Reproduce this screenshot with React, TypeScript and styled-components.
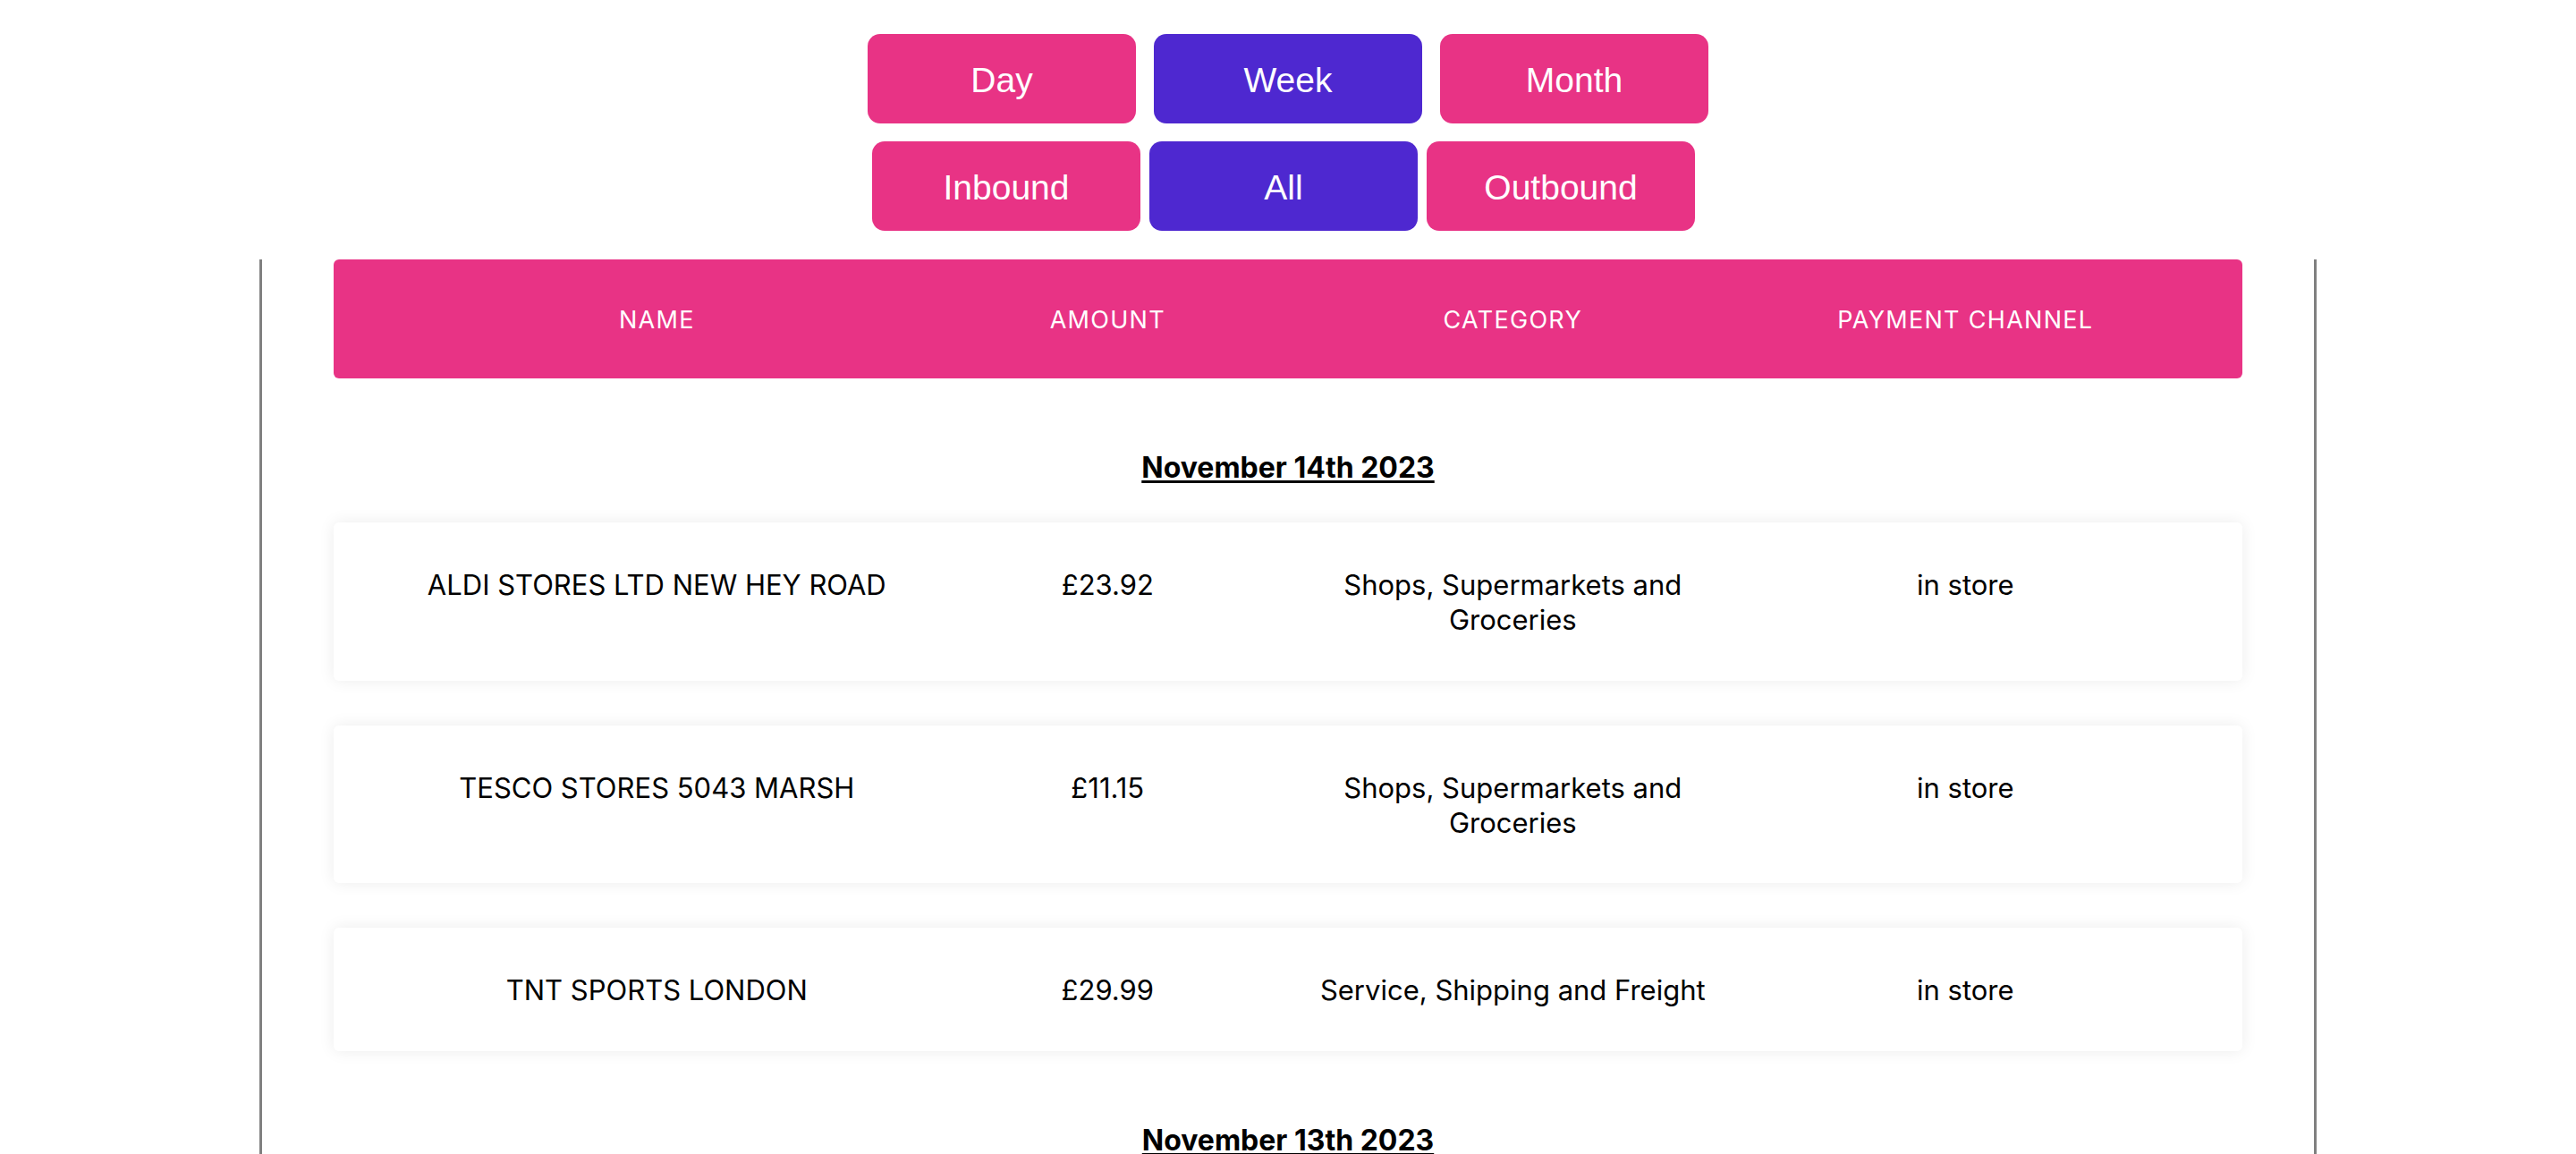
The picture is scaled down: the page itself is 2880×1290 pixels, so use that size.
import React, { useState } from 'react';
import styled, { createGlobalStyle } from 'styled-components';

const GlobalStyle = createGlobalStyle`
  html, body {
    margin: 0;
    padding: 0;
    background: #fff;
  }
  body {
    font-family: Inter, "Noto Sans", sans-serif;
    color: #000;
  }
`;

const Filters = styled.div`
  display: flex;
  flex-direction: column;
  align-items: center;
  gap: 20px;
  padding-top: 38px;
  margin-bottom: 32px;
`;

const FilterRow = styled.div<{ $gap: number; $shift?: number }>`
  display: flex;
  gap: ${p => p.$gap}px;
  margin-right: ${p => (p.$shift || 0)}px;
`;

const FilterButton = styled.button<{ $active: boolean }>`
  width: 300px;
  height: 100px;
  border: none;
  border-radius: 14px;
  background-color: ${p => (p.$active ? '#4e28d0' : '#e83385')};
  color: #fff;
  font-family: "Liberation Sans", Arial, sans-serif;
  font-size: 39px;
  cursor: pointer;
  padding: 3px 0 0;
`;

const Panel = styled.div`
  width: 2300px;
  min-height: 1100px;
  margin: 0 auto;
  box-sizing: border-box;
  border-left: 3px solid #808080;
  border-right: 3px solid #808080;
  padding-bottom: 80px;
`;

const Columns = styled.div`
  display: grid;
  grid-template-columns: 574px 434px 472px 540px;
  padding: 0 43px 0 74px;
  text-align: center;
`;

const HeaderBar = styled(Columns)`
  width: 93%;
  margin: 0 auto;
  height: 133px;
  box-sizing: border-box;
  align-items: center;
  background-color: #e83385;
  border-radius: 6px;
  color: #fff;
  font-size: 27px;
  letter-spacing: 1.3px;
  text-transform: uppercase;
  padding-top: 2px;
`;

const DateHeading = styled.h3`
  margin: 0;
  padding: 81px 0 42px;
  text-align: center;
  font-size: 32px;
  font-weight: 700;
  line-height: 1.2;
  text-decoration: underline;
  text-underline-offset: 3px;
`;

const Rows = styled.div`
  display: flex;
  flex-direction: column;
  gap: 50px;
`;

const Row = styled(Columns)`
  width: 93%;
  margin: 0 auto;
  box-sizing: border-box;
  align-items: start;
  padding-top: 51px;
  padding-bottom: 48px;
  background: #fff;
  border-radius: 6px;
  box-shadow: 0 0 18px rgba(0, 0, 0, 0.08);
  font-size: 31px;
  line-height: 1.25;
`;

const Cell = styled.div`
  padding: 0 10px;
`;

type Tx = { name: string; amount: string; category: string; channel: string };

const groups: { date: string; items: Tx[] }[] = [
  {
    date: 'November 14th 2023',
    items: [
      { name: 'ALDI STORES LTD NEW HEY ROAD', amount: '£23.92', category: 'Shops, Supermarkets and Groceries', channel: 'in store' },
      { name: 'TESCO STORES 5043 MARSH', amount: '£11.15', category: 'Shops, Supermarkets and Groceries', channel: 'in store' },
      { name: 'TNT SPORTS LONDON', amount: '£29.99', category: 'Service, Shipping and Freight', channel: 'in store' },
    ],
  },
  {
    date: 'November 13th 2023',
    items: [],
  },
];

const App = () => {
  const [period, setPeriod] = useState('Week');
  const [direction, setDirection] = useState('All');

  return (
    <>
      <GlobalStyle />
      <Filters>
        <FilterRow $gap={20}>
          {['Day', 'Week', 'Month'].map(p => (
            <FilterButton key={p} $active={period === p} onClick={() => setPeriod(p)}>
              {p}
            </FilterButton>
          ))}
        </FilterRow>
        <FilterRow $gap={10} $shift={10}>
          {['Inbound', 'All', 'Outbound'].map(d => (
            <FilterButton key={d} $active={direction === d} onClick={() => setDirection(d)}>
              {d}
            </FilterButton>
          ))}
        </FilterRow>
      </Filters>
      <Panel>
        <HeaderBar>
          <Cell>Name</Cell>
          <Cell>Amount</Cell>
          <Cell>Category</Cell>
          <Cell>Payment Channel</Cell>
        </HeaderBar>
        {groups.map(g => (
          <div key={g.date}>
            <DateHeading>{g.date}</DateHeading>
            {g.items.length > 0 && (
              <Rows>
                {g.items.map((t, i) => (
                  <Row key={i}>
                    <Cell>{t.name}</Cell>
                    <Cell>{t.amount}</Cell>
                    <Cell>{t.category}</Cell>
                    <Cell>{t.channel}</Cell>
                  </Row>
                ))}
              </Rows>
            )}
          </div>
        ))}
      </Panel>
    </>
  );
};

export default App;
